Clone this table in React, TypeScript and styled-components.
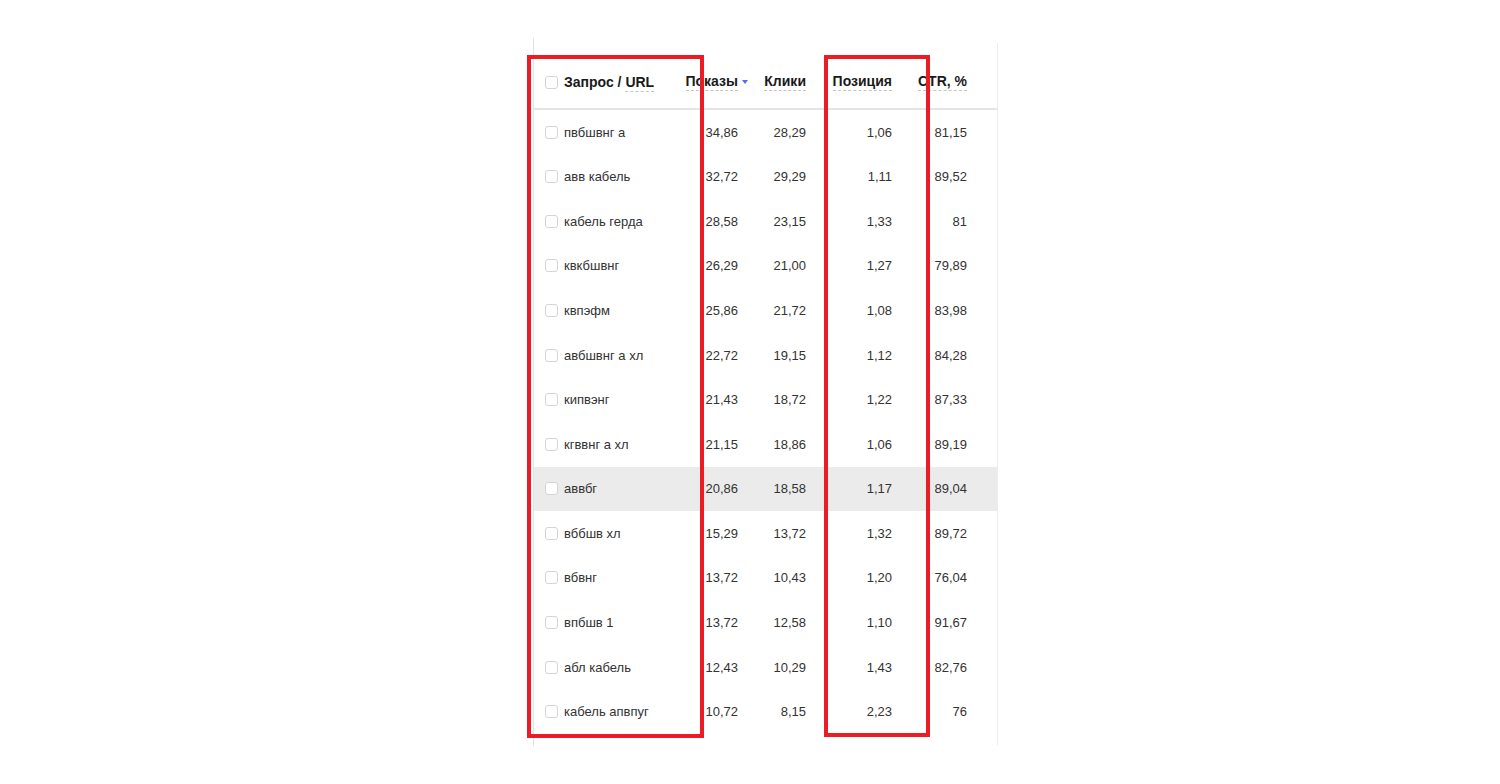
import React from "react";
import styled, { createGlobalStyle } from "styled-components";

const Global = createGlobalStyle`
  html, body { margin: 0; padding: 0; background: #fff; }
  body { font-family: "Liberation Sans", Arial, sans-serif; }
`;

const Stage = styled.div`
  position: relative;
  width: 1500px;
  height: 784px;
  overflow: hidden;
`;

const Panel = styled.div`
  margin-left: 533px;
  margin-top: 38px;
  width: 465px;
  height: 708px;
  border-left: 1px solid #e3e3e3;
  box-sizing: border-box;
  padding-top: 5px;
`;

const Table = styled.div`
  width: 464px;
  height: 702px;
  border-right: 1px solid #ececec;
  box-sizing: border-box;
`;

const cols = "141px 73px 68px 86px 75px 20px";

const HeaderRow = styled.div`
  display: grid;
  grid-template-columns: ${cols};
  height: 67px;
  padding-top: 13px;
  box-sizing: border-box;
  border-bottom: 2px solid #e4e4e4;
  align-items: center;
  font-size: 14px;
  font-weight: 700;
  color: #1a1a1a;
`;

const Row = styled.div<{ $active?: boolean }>`
  display: grid;
  grid-template-columns: ${cols};
  height: 44.57px;
  align-items: center;
  font-size: 13px;
  color: #333;
  background: ${(p) => (p.$active ? "#ebebeb" : "transparent")};
`;

const QueryCell = styled.div`
  display: flex;
  align-items: center;
  gap: 6px;
  padding-left: 11px;
  white-space: nowrap;
`;

const NumCell = styled.div<{ $tight?: boolean }>`
  display: flex;
  align-items: center;
  justify-content: flex-end;
  padding-right: ${(p) => (p.$tight ? "0" : "10px")};
  white-space: nowrap;
`;

const Check = styled.span`
  display: inline-block;
  width: 13px;
  height: 13px;
  box-sizing: border-box;
  border: 1px solid #d4d4d4;
  border-radius: 3px;
  background: #fff;
  flex: none;
`;

const Dashed = styled.span`
  border-bottom: 1px dashed #c4c4c4;
  padding-bottom: 1px;
`;

const SortArrow = styled.span`
  display: inline-block;
  width: 0;
  height: 0;
  margin-left: 4px;
  border-left: 3.5px solid transparent;
  border-right: 3.5px solid transparent;
  border-top: 4px solid #4f6ef7;
`;

const Frame = styled.div<{ $x: number; $y: number; $w: number; $h: number }>`
  position: absolute;
  left: ${(p) => p.$x}px;
  top: ${(p) => p.$y}px;
  width: ${(p) => p.$w}px;
  height: ${(p) => p.$h}px;
  border: 4px solid #ec1c24;
  box-sizing: border-box;
  pointer-events: none;
`;

const data: [string, string, string, string, string][] = [
  ["пвбшвнг а", "34,86", "28,29", "1,06", "81,15"],
  ["авв кабель", "32,72", "29,29", "1,11", "89,52"],
  ["кабель герда", "28,58", "23,15", "1,33", "81"],
  ["квкбшвнг", "26,29", "21,00", "1,27", "79,89"],
  ["квпэфм", "25,86", "21,72", "1,08", "83,98"],
  ["авбшвнг а хл", "22,72", "19,15", "1,12", "84,28"],
  ["кипвэнг", "21,43", "18,72", "1,22", "87,33"],
  ["кгввнг а хл", "21,15", "18,86", "1,06", "89,19"],
  ["аввбг", "20,86", "18,58", "1,17", "89,04"],
  ["вббшв хл", "15,29", "13,72", "1,32", "89,72"],
  ["вбвнг", "13,72", "10,43", "1,20", "76,04"],
  ["впбшв 1", "13,72", "12,58", "1,10", "91,67"],
  ["абл кабель", "12,43", "10,29", "1,43", "82,76"],
  ["кабель апвпуг", "10,72", "8,15", "2,23", "76"],
];

export default function App() {
  return (
    <Stage>
      <Global />
      <Panel>
        <Table>
          <HeaderRow>
            <QueryCell>
              <Check />
              <span>
                Запрос / <Dashed>URL</Dashed>
              </span>
            </QueryCell>
            <NumCell $tight>
              <Dashed>Показы</Dashed>
              <SortArrow />
            </NumCell>
            <NumCell>
              <Dashed>Клики</Dashed>
            </NumCell>
            <NumCell>
              <Dashed>Позиция</Dashed>
            </NumCell>
            <NumCell>
              <Dashed>CTR, %</Dashed>
            </NumCell>
            <div />
          </HeaderRow>
          {data.map((r, i) => (
            <Row key={r[0]} $active={i === 8}>
              <QueryCell>
                <Check />
                <span>{r[0]}</span>
              </QueryCell>
              <NumCell>{r[1]}</NumCell>
              <NumCell>{r[2]}</NumCell>
              <NumCell>{r[3]}</NumCell>
              <NumCell>{r[4]}</NumCell>
              <div />
            </Row>
          ))}
        </Table>
      </Panel>
      <Frame $x={527} $y={55} $w={177} $h={683} />
      <Frame $x={824} $y={55} $w={106} $h={682} />
    </Stage>
  );
}
